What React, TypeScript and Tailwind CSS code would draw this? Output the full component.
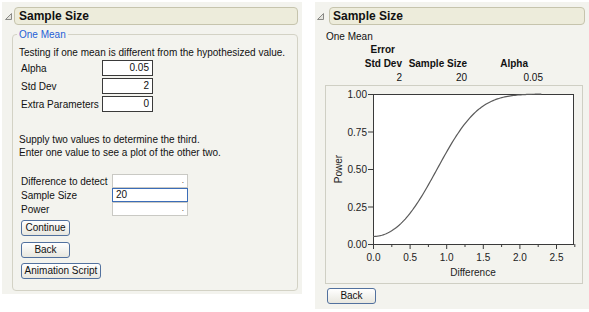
import React from 'react'

// normal cdf (Abramowitz & Stegun 7.1.26)
function phi(x: number) {
  const t = 1 / (1 + 0.3275911 * Math.abs(x) / Math.SQRT2)
  const y =
    1 -
    ((((1.061405429 * t - 1.453152027) * t + 1.421413741) * t - 0.284496736) * t + 0.254829592) *
      t *
      Math.exp(-(x * x) / 2)
  return x >= 0 ? (1 + y) / 2 : (1 - y) / 2
}

function power(d: number) {
  const delta = (d * Math.sqrt(20)) / 2
  return phi(delta - 1.96) + phi(-delta - 1.96)
}

const px = (d: number) => 47 + d * 73.2
const py = (p: number) => 158 - p * 150

function Disclosure() {
  return (
    <svg width="7" height="7" viewBox="0 0 7 7" className="shrink-0">
      <polygon points="6.5,0.5 6.5,6.5 0.5,6.5" fill="#e4e4de" stroke="#8a8a86" strokeWidth="1" />
    </svg>
  )
}

function TitleBar({ className }: { className: string }) {
  return (
    <div className={`flex-1 h-[18px] rounded-[4px] border border-[#c6c4ad] bg-[#edecdb] flex items-center text-[12px] font-bold ${className}`}>
      Sample Size
    </div>
  )
}

function Button({ label, w }: { label: string; w: string }) {
  return (
    <div
      className={`${w} h-[16px] rounded-[3px] border border-[#52719e] bg-linear-to-b from-white to-[#e8e7df] flex items-center justify-center text-[10px] leading-none`}
    >
      {label}
    </div>
  )
}

function Chart() {
  const pts: string[] = []
  for (let d = 0; d <= 2.3001; d += 0.02) {
    pts.push(`${px(d).toFixed(2)},${py(Math.min(power(d), 1)).toFixed(2)}`)
  }
  const yTicks = [0, 0.25, 0.5, 0.75, 1]
  const xMajor = [0, 0.5, 1, 1.5, 2, 2.5]
  const xMinor = [0.25, 0.75, 1.25, 1.75, 2.25, 2.75]
  return (
    <svg width="256" height="197" className="font-['Liberation_Sans',Arial,sans-serif]">
      <rect x="47.5" y="8.5" width="200" height="150" fill="#ffffff" stroke="#3a3a3a" />
      {yTicks.map((t) => (
        <g key={t}>
          <line x1="42" x2="47" y1={py(t) + 0.5} y2={py(t) + 0.5} stroke="#3a3a3a" />
          <text x="41" y={py(t) + 4} fontSize="10" textAnchor="end" fill="#222">
            {t.toFixed(2)}
          </text>
        </g>
      ))}
      {xMajor.map((t) => (
        <g key={t}>
          <line x1={px(t) + 0.5} x2={px(t) + 0.5} y1="158" y2="163" stroke="#3a3a3a" />
          <text x={px(t) + 0.5} y="175" fontSize="10" textAnchor="middle" fill="#222">
            {t.toFixed(1)}
          </text>
        </g>
      ))}
      {xMinor.map((t) => (
        <line key={t} x1={px(t) + 0.5} x2={px(t) + 0.5} y1="158" y2="161" stroke="#3a3a3a" />
      ))}
      <polyline points={pts.join(' ')} fill="none" stroke="#5a5a5a" strokeWidth="1.2" />
      <text x="147" y="190" fontSize="10" textAnchor="middle" fill="#222">
        Difference
      </text>
      <text x="0" y="0" fontSize="10" textAnchor="middle" fill="#222" transform="translate(16 83) rotate(-90)">
        Power
      </text>
    </svg>
  )
}

export default function App() {
  return (
    <div className="w-[589px] h-[312px] bg-white flex items-start font-['Liberation_Sans',Arial,sans-serif] text-[10px] leading-[13px] text-[#111]">
      {/* left: entry dialog */}
      <div className="mt-[2px] ml-[2px] w-[300px] h-[292px] bg-[#f3f3ee] flex flex-col">
        <div className="mt-[5px] h-[18px] flex items-center pl-[3px] pr-[4px] gap-[2px]">
          <Disclosure />
          <TitleBar className="pl-[4px]" />
        </div>
        <fieldset className="mt-[3px] ml-[10px] w-[286px] h-[263px] border border-[#d3d2c5] rounded-[4px] pl-[4px] pr-[4px] min-w-0">
          <legend className="px-[2px] text-[#1f5fd6] leading-[13px]">One Mean</legend>
          <div className="flex flex-col pl-[2px]">
            <p className="mt-[5px]">Testing if one mean is different from the hypothesized value.</p>
            <div className="mt-[1px] flex flex-col gap-[2px]">
              {[
                ['Alpha', '0.05'],
                ['Std Dev', '2'],
                ['Extra Parameters', '0'],
              ].map(([label, val]) => (
                <div key={label} className="h-[16px] flex items-center">
                  <span className="w-[83px] pl-[2px]">{label}</span>
                  <div className="w-[51px] h-[16px] border border-[#3a3a3a] bg-white text-right pr-[3px] leading-[14px]">{val}</div>
                </div>
              ))}
            </div>
            <p className="mt-[21px]">Supply two values to determine the third.</p>
            <p>Enter one value to see a plot of the other two.</p>
            <div className="mt-[15px] flex flex-col">
              <div className="h-[14px] flex items-center">
                <span className="w-[93px] pl-[2px]">Difference to detect</span>
                <div className="w-[76px] h-[14px] border border-[#c9c9c4] bg-white text-right pr-[3px] text-[8px] leading-[11px]">.</div>
              </div>
              <div className="h-[14px] flex items-center">
                <span className="w-[93px] pl-[2px]">Sample Size</span>
                <div className="w-[76px] h-[14px] border-[1.5px] border-[#3b6db8] bg-white pl-[3px] leading-[11px]">20</div>
              </div>
              <div className="h-[14px] flex items-center">
                <span className="w-[93px] pl-[2px]">Power</span>
                <div className="w-[76px] h-[14px] border border-[#c9c9c4] bg-white text-right pr-[3px] text-[8px] leading-[11px]">.</div>
              </div>
            </div>
            <div className="mt-[4px] ml-[2px] flex flex-col items-start">
              <Button label="Continue" w="w-[49px]" />
              <div className="mt-[6px]">
                <Button label="Back" w="w-[49px]" />
              </div>
              <div className="mt-[5px]">
                <Button label="Animation Script" w="w-[80px]" />
              </div>
            </div>
          </div>
        </fieldset>
      </div>

      {/* right: result */}
      <div className="mt-[2px] ml-[13px] w-[274px] h-[307px] bg-[#f3f3ee] flex flex-col">
        <div className="mt-[5px] h-[18px] flex items-center pl-[2px] pr-[4px] gap-[5px]">
          <Disclosure />
          <TitleBar className="pl-[3px]" />
        </div>
        <p className="mt-[5px] pl-[11px]">One Mean</p>
        <div className="pl-[11px] leading-[14px]">
          <div className="flex font-bold">
            <span className="w-[76px] text-right pr-[7px]">Error</span>
          </div>
          <div className="flex font-bold">
            <span className="w-[76px] text-right">Std Dev</span>
            <span className="w-[65px] text-right">Sample Size</span>
            <span className="w-[76px] text-right pr-[15px]">Alpha</span>
          </div>
          <div className="flex">
            <span className="w-[76px] text-right">2</span>
            <span className="w-[65px] text-right">20</span>
            <span className="w-[76px] text-right">0.05</span>
          </div>
        </div>
        <div className="ml-[10px] w-[258px] h-[199px] border border-[#cfcfc4]">
          <Chart />
        </div>
        <div className="mt-[4px] ml-[12px]">
          <Button label="Back" w="w-[49px]" />
        </div>
      </div>
    </div>
  )
}
